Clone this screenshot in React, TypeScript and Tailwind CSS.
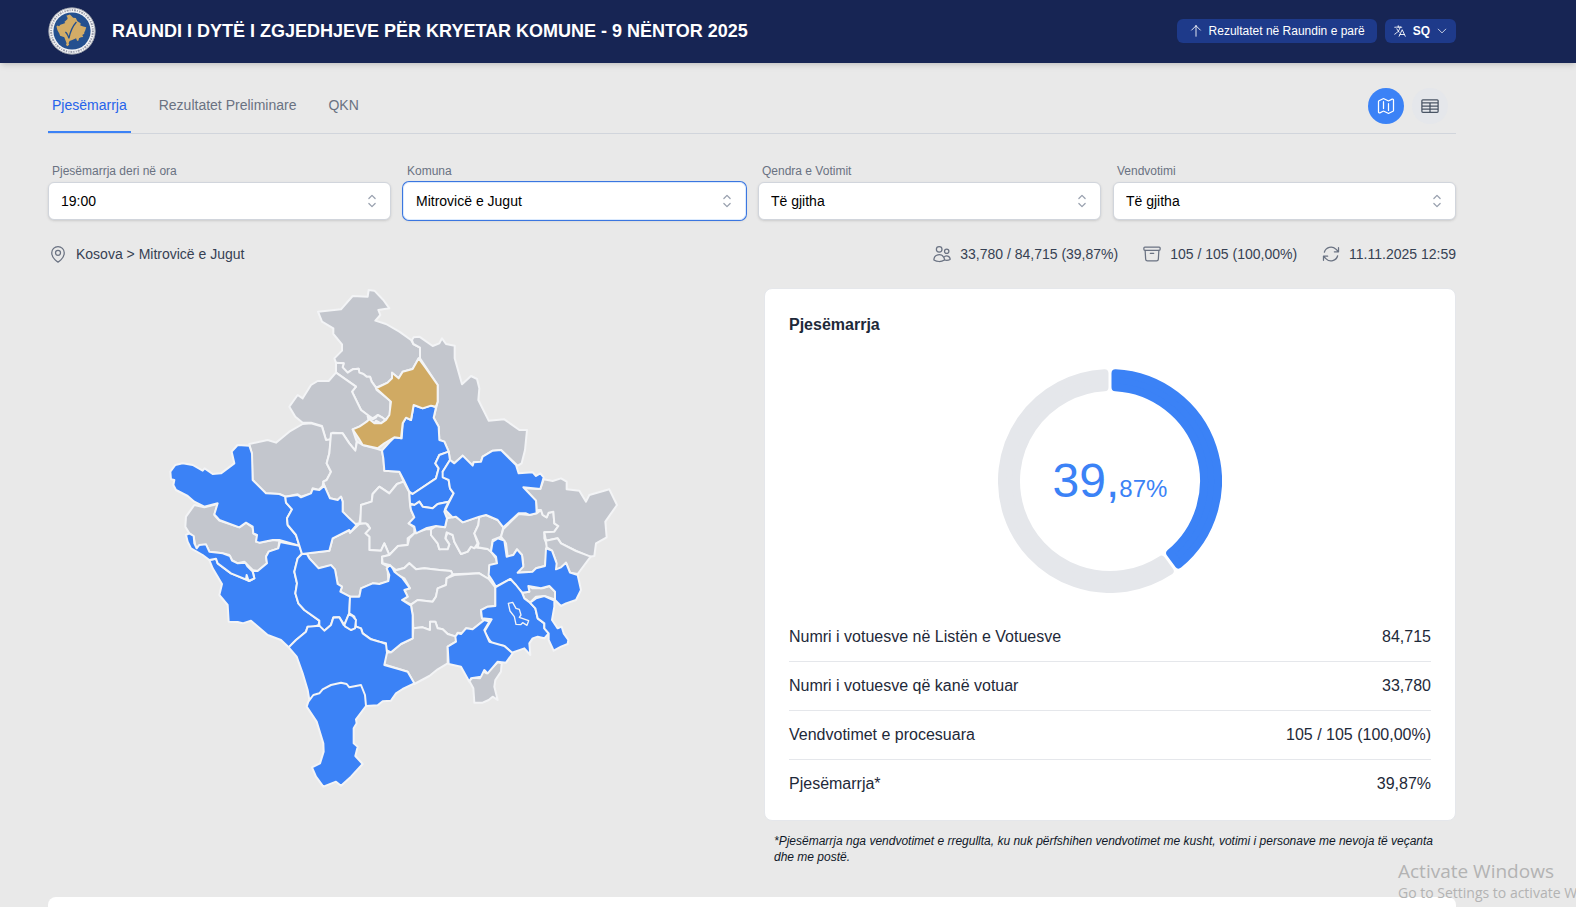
import React from 'react';
import clsx from 'clsx';
import {
  HiChevronUpDown,
  HiOutlineArchiveBox,
  HiOutlineArrowPath,
  HiOutlineArrowUp,
  HiOutlineChevronDown,
  HiOutlineLanguage,
  HiOutlineMap,
  HiOutlineMapPin,
  HiOutlineTableCells,
  HiOutlineUsers,
} from 'react-icons/hi2';

type Status = 'idle' | 'active' | 'selected';

interface Municipality {
  name: string;
  status: Status;
  points: string;
}

const MUNICIPALITIES: Municipality[] = [
  { name: 'Leposaviq', status: 'idle', points: '476,95 545,88 580,48 625,50 628,30 645,32 672,60 690,85 657,90 663,105 648,122 680,132 720,155 755,180 762,192 782,203 782,235 778,235 760,267 730,275 718,295 698,278 698,295 685,308 650,323 637,305 632,290 622,290 612,282 600,278 598,266 580,268 565,278 550,262 553,250 530,248 525,235 548,212 548,193 522,162 522,145 488,125' },
  { name: 'Zveçan', status: 'idle', points: '530,248 553,250 550,262 565,278 580,268 598,266 600,278 612,282 622,290 632,290 637,305 650,323 652,330 693,362 692,405 678,420 668,412 655,405 640,415 625,405 605,390 578,335 590,320 530,278' },
  { name: 'Zubin Potok', status: 'idle', points: '530,278 590,320 578,335 605,390 625,405 628,420 612,435 580,448 592,485 588,512 570,490 550,460 520,458 512,480 500,480 488,438 455,428 430,428 408,410 390,380 415,345 430,355 455,315 475,303 508,303' },
  { name: 'Istog', status: 'idle', points: '270,492 325,480 350,488 390,455 430,432 455,430 488,440 500,480 515,478 510,520 502,550 515,575 502,600 492,605 490,618 478,630 460,625 455,640 425,650 415,643 378,650 360,642 320,640 280,600 277,520' },
  { name: 'Skenderaj', status: 'idle', points: '515,460 550,460 570,490 588,512 593,485 610,495 655,507 668,512 672,535 675,572 720,575 733,605 713,612 690,640 660,620 640,642 637,665 605,675 605,700 600,730 585,733 570,715 550,695 550,665 545,650 535,660 512,655 495,617 492,605 502,600 515,575 502,550 510,520' },
  { name: 'Podujevë', status: 'idle', points: '758,180 763,172 780,170 820,198 840,190 848,175 860,192 886,197 886,235 908,313 935,288 953,297 960,325 957,360 988,422 1035,418 1080,450 1103,450 1097,510 1087,550 1075,557 1025,510 1000,512 970,530 965,545 943,547 940,557 910,527 885,550 872,540 868,515 855,485 840,480 838,440 823,413 835,365 835,315 782,235 782,203 762,192' },
  { name: 'Drenas', status: 'idle', points: '733,605 750,637 752,672 755,690 765,712 748,730 765,742 765,760 745,775 745,795 716,798 690,825 675,790 665,812 630,810 630,770 618,760 632,745 625,733 603,730 605,675 637,665 640,642 660,620 690,640 713,612' },
  { name: 'Deçan', status: 'idle', points: '105,675 135,682 175,672 165,705 180,722 240,742 260,728 280,742 282,760 295,768 290,785 300,788 340,780 360,782 357,805 328,815 320,830 323,850 295,873 280,870 255,845 235,850 218,840 210,825 190,820 150,815 140,795 120,795 110,808 103,770 90,760 78,740 80,710' },
  { name: 'Malishevë', status: 'idle', points: '443,820 510,812 520,775 570,750 572,758 600,732 620,730 632,745 618,760 630,770 630,810 665,812 675,790 690,825 668,830 668,850 690,862 685,870 687,905 660,912 640,910 605,925 600,950 572,950 543,935 548,920 535,912 527,870 515,857 478,865 450,835' },
  { name: 'Lipjan', status: 'idle', points: '690,825 716,798 745,795 750,775 765,760 800,748 815,748 815,765 835,790 840,808 865,805 870,793 858,775 865,757 880,765 885,785 905,822 925,815 935,800 985,807 995,815 1010,835 1013,850 990,858 988,897 960,880 880,883 875,873 840,870 795,865 770,868 750,850 735,864 710,870 690,855 670,850 668,830' },
  { name: 'Graçanicë', status: 'idle', points: '815,748 830,738 857,742 863,715 880,712 890,710 910,727 960,710 957,735 945,760 955,790 945,805 935,800 925,815 905,822 885,785 880,765 862,757 858,775 870,793 865,808 840,808 835,790 815,765' },
  { name: 'Fshatrat e Prishtinës', status: 'idle', points: '960,710 980,705 1015,720 1032,742 1025,770 1000,780 995,815 985,807 955,802 958,790 945,760 957,735' },
  { name: 'Novobërdë', status: 'idle', points: '1032,747 1078,702 1110,705 1132,700 1145,690 1150,705 1162,712 1168,698 1182,695 1185,730 1197,738 1185,755 1155,757 1155,775 1165,800 1157,858 1130,865 1120,875 1075,878 1092,855 1088,825 1073,808 1062,825 1045,830 1040,790 1025,770' },
  { name: 'Kamenicë', status: 'idle', points: '1153,598 1180,603 1205,595 1222,605 1222,628 1260,632 1280,665 1290,645 1350,628 1373,675 1338,725 1342,772 1310,790 1305,828 1290,830 1250,813 1205,790 1195,775 1160,782 1155,757 1185,755 1197,738 1185,730 1182,695 1168,698 1162,712 1150,705 1145,690 1132,690 1130,662 1095,625 1143,627' },
  { name: 'Ranillug', status: 'idle', points: '1160,782 1195,775 1205,790 1250,813 1294,830 1255,882 1232,878 1220,848 1205,868 1190,866 1190,845 1178,812 1162,802' },
  { name: 'Shtime', status: 'idle', points: '705,872 735,864 750,850 770,868 795,865 840,870 875,873 880,883 862,895 860,915 835,925 830,950 820,965 775,960 755,974 730,960 745,950 735,930 752,925 735,895 710,882' },
  { name: 'Ferizaj', status: 'idle', points: '755,974 775,960 820,965 830,950 835,925 860,915 862,895 885,885 960,880 988,897 1008,922 1008,978 985,980 965,992 968,1015 975,1020 940,1048 920,1045 910,1060 895,1058 890,1070 865,1062 850,1048 835,1045 828,1025 812,1025 812,1050 790,1042 762,1045 760,1005' },
  { name: 'Shtërpcë', status: 'idle', points: '762,1045 790,1042 812,1050 812,1025 828,1025 835,1045 850,1048 865,1062 890,1070 890,1085 865,1100 865,1150 835,1168 810,1188 765,1212 745,1175 675,1153 680,1118 695,1117 725,1092 760,1075' },
  { name: 'Partesh', status: 'idle', points: '1088,938 1110,935 1107,918 1120,925 1150,925 1170,918 1187,935 1187,958 1155,948 1130,950 1112,968 1095,955' },
  { name: 'Hani i Elezit', status: 'idle', points: '930,1203 940,1193 962,1195 968,1172 982,1180 1015,1147 1027,1150 1025,1175 1008,1200 1005,1220 1015,1260 1000,1250 988,1260 970,1268 945,1268 942,1225' },
  { name: 'Pejë', status: 'active', points: '33,575 48,555 70,550 100,555 130,572 136,565 160,582 185,580 225,550 217,515 235,495 270,497 278,520 280,600 320,640 360,642 378,650 380,668 398,688 383,715 385,735 410,765 420,797 360,780 340,780 300,788 290,785 293,765 282,760 280,740 260,728 240,742 180,720 165,703 175,670 135,680 105,665 85,648 50,630 42,615 45,600 35,598' },
  { name: 'Gjakovë', status: 'active', points: '150,840 170,836 175,850 215,880 270,903 285,895 280,873 295,873 323,850 320,830 328,815 357,805 362,786 420,797 428,820 415,835 405,875 413,910 408,940 417,970 435,990 480,1022 478,1035 460,1042 445,1040 440,1055 410,1080 388,1102 365,1080 325,1065 275,1022 250,1030 235,1026 208,1025 205,975 180,945 188,912 160,865' },
  { name: 'Junik', status: 'active', points: '90,760 103,768 105,790 112,805 120,795 140,793 150,815 190,820 212,828 218,842 235,850 258,848 265,860 280,875 285,895 268,903 262,885 260,898 215,880 175,850 170,836 150,840 130,825 95,805 85,785 80,765' },
  { name: 'Klinë', status: 'active', points: '378,650 415,645 425,652 455,640 460,627 480,630 495,617 512,655 535,660 545,650 550,665 550,695 570,715 592,735 572,758 570,750 520,775 510,812 428,822 420,797 410,765 385,735 383,715 398,688 380,668' },
  { name: 'Rahovec', status: 'active', points: '428,822 443,822 450,835 478,865 515,855 527,868 535,912 548,920 543,935 572,950 570,1000 555,1035 540,1012 522,1012 515,1035 495,1052 480,1040 480,1022 435,990 417,970 408,940 413,910 405,875 415,835' },
  { name: 'Suharekë', status: 'active', points: '682,865 692,855 700,865 705,875 730,895 752,925 735,930 745,950 728,960 755,977 760,1005 760,1075 725,1092 695,1117 680,1110 680,1090 660,1085 635,1078 610,1060 605,1045 590,1040 585,1010 570,1000 572,950 600,950 605,925 640,910 660,912 687,903 690,885' },
  { name: 'Prizren', status: 'active', points: '388,1102 410,1080 440,1055 445,1040 480,1037 495,1052 515,1035 522,1013 540,1012 553,1035 575,1050 590,1040 605,1045 610,1060 635,1078 660,1085 680,1092 683,1118 675,1155 720,1168 745,1175 765,1210 730,1227 710,1240 695,1262 670,1264 655,1276 620,1278 590,1250 450,1260 445,1230 430,1180 412,1130' },
  { name: 'Mamushë', status: 'active', points: '555,1035 568,1003 580,1008 590,1020 587,1045 575,1050 558,1040' },
  { name: 'Dragash', status: 'active', points: '447,1265 462,1245 480,1240 490,1228 515,1215 545,1208 562,1212 570,1222 605,1215 617,1245 620,1278 590,1318 592,1330 583,1345 583,1390 595,1400 588,1428 610,1452 575,1490 545,1517 530,1505 492,1520 470,1490 458,1462 482,1450 493,1415 492,1390 472,1325 442,1280' },
  { name: 'Vushtrri', status: 'active', points: '668,512 690,487 705,472 727,475 730,430 740,413 755,420 763,375 790,385 815,377 830,382 823,413 838,440 840,480 855,485 868,515 840,525 828,550 838,565 830,595 760,642 750,635 733,600 720,575 675,572 672,535' },
  { name: 'Obiliq', status: 'active', points: '868,515 872,540 850,575 855,592 868,600 872,625 883,640 868,665 835,672 820,685 790,680 780,665 765,675 752,670 750,637 760,642 830,595 838,565 828,550 840,525' },
  { name: 'Prishtinë', status: 'active', points: '872,540 885,550 910,527 940,557 943,547 965,545 970,530 1000,512 1025,510 1070,555 1078,580 1120,577 1130,588 1143,580 1153,592 1143,627 1092,622 1130,662 1132,700 1110,705 1100,700 1078,700 1032,742 1015,720 980,705 960,710 910,727 890,710 880,712 858,690 870,665 883,640 872,625 868,600 850,592 850,575' },
  { name: 'Fushë Kosovë', status: 'active', points: '752,672 765,675 780,665 790,680 820,685 835,672 868,665 858,685 855,695 863,715 857,742 830,738 800,745 770,760 765,740 748,730 765,712 755,690' },
  { name: 'Gjilan', status: 'active', points: '1000,785 1015,775 1035,782 1042,830 1062,825 1073,808 1088,825 1092,860 1075,878 1120,875 1130,865 1157,858 1160,805 1178,812 1192,850 1190,868 1205,862 1220,848 1232,878 1255,885 1265,930 1250,960 1220,970 1205,978 1187,960 1187,935 1170,918 1145,925 1107,918 1110,935 1088,938 1053,897 1010,920 998,900 988,885 990,855 1013,850 1010,830 995,815' },
  { name: 'Viti', status: 'active', points: '1008,922 1053,897 1070,915 1088,938 1095,955 1112,968 1128,985 1135,1015 1155,1030 1155,1045 1168,1060 1155,1075 1135,1070 1120,1075 1110,1090 1113,1125 1095,1105 1058,1118 1035,1098 1000,1092 990,1080 975,1055 997,1018 968,1015 965,990 985,980 1008,978' },
  { name: 'Viti Lindore', status: 'active', points: '1112,968 1130,955 1155,948 1185,962 1185,980 1178,1020 1195,1045 1207,1040 1213,1060 1227,1080 1225,1092 1205,1100 1183,1112 1168,1080 1168,1060 1155,1045 1155,1030 1135,1015 1128,985' },
  { name: 'Kaçanik', status: 'active', points: '865,1100 890,1085 888,1070 895,1060 905,1062 920,1045 940,1048 975,1020 990,1025 975,1050 990,1085 1035,1098 1060,1120 1040,1148 1015,1145 985,1180 975,1170 965,1190 935,1195 930,1205 905,1160 868,1152' },
  { name: 'Mitrovicë e Veriut', status: 'idle', points: '625,410 640,418 650,412 655,405 668,412 678,420 665,430 650,422 645,430 630,420' },
  { name: 'Mitrovicë e Jugut', status: 'selected', points: '580,448 600,440 622,425 630,418 645,430 665,430 680,420 690,405 695,365 650,325 685,308 698,295 698,278 718,295 730,275 760,267 778,235 798,262 835,315 835,365 830,380 815,377 790,385 763,375 755,420 740,413 730,430 725,475 705,472 675,490 655,505 610,495 598,475' },
];

const ENCLAVE = '1047,970 1060,967 1070,985 1080,988 1085,1005 1080,1012 1108,1022 1103,1036 1090,1028 1084,1034 1070,1033 1065,1010 1052,993';

const FILTERS = [
  { id: 'hour', label: 'Pjesëmarrja deri në ora', value: '19:00', focused: false },
  { id: 'municipality', label: 'Komuna', value: 'Mitrovicë e Jugut', focused: true },
  { id: 'center', label: 'Qendra e Votimit', value: 'Të gjitha', focused: false },
  { id: 'station', label: 'Vendvotimi', value: 'Të gjitha', focused: false },
];

const ROWS = [
  ['Numri i votuesve në Listën e Votuesve', '84,715'],
  ['Numri i votuesve që kanë votuar', '33,780'],
  ['Vendvotimet e procesuara', '105 / 105 (100,00%)'],
  ['Pjesëmarrja*', '39,87%'],
];

function Logo() {
  return (
    <svg viewBox="23 20 145 147" className="size-12 shrink-0" aria-hidden="true">
      <circle cx="95.5" cy="93.5" r="72" fill="#f3f4f6" />
      <circle cx="95.5" cy="93.5" r="71" fill="none" stroke="#6b7280" strokeWidth="2" />
      <circle cx="95.5" cy="93.5" r="64" fill="none" stroke="#9a9dab" strokeWidth="6" strokeDasharray="4 3 6 3 3 4" />
      <circle cx="95.5" cy="93.5" r="57" fill="#24508f" />
      <path
        d="M78 47 89 43 93 47 99 53 107 54 112 64 122 70 121 77 130 80 139 82 136 92 133 98 133 102 127 106 130 112 123 113 117 116 115 123 111 123 108 116 98 120 88 124 85 131 87 135 82 140 77 136 79 131 76 123 72 113 59 108 57 102 51 91 48 80 50 77 56 79 60 74 67 72 75 69 72 66 77 61 82 57 81 51Z"
        fill="#d3ac66"
      />
      <path d="M75 97c6 3 8 9 11 19 4-20 12-38 23-50" fill="none" stroke="#24508f" strokeWidth="4" />
    </svg>
  );
}

function Header() {
  return (
    <header className="bg-[#172554] pt-[7px] pb-2 shadow-md">
      <div className="flex max-w-[1504px] items-center px-12">
        <Logo />
        <h1 className="ml-4 flex-1 text-lg font-bold text-white">
          RAUNDI I DYTË I ZGJEDHJEVE PËR KRYETAR KOMUNE - 9 NËNTOR 2025
        </h1>
        <div className="flex items-center gap-2 text-xs text-white">
          <a href="#raundi-1" className="flex h-6 items-center gap-1.5 rounded-md bg-[#1e3a8a] px-3 font-medium">
            <HiOutlineArrowUp className="size-3.5" />
            Rezultatet në Raundin e parë
          </a>
          <button type="button" className="flex h-6 items-center gap-1.5 rounded-md bg-[#1e3a8a] px-2 font-bold">
            <HiOutlineLanguage className="size-3.5" />
            SQ
            <HiOutlineChevronDown className="size-3" />
          </button>
        </div>
      </div>
    </header>
  );
}

function TabBar() {
  const tabs = ['Pjesëmarrja', 'Rezultatet Preliminare', 'QKN'];
  return (
    <div className="flex items-end justify-between border-b border-gray-300">
      <nav className="flex gap-6 text-sm">
        {tabs.map((tab, i) => (
          <a
            key={tab}
            href={`#tab-${i}`}
            className={clsx(
              'border-b-2 px-1 pb-4',
              i === 0 ? 'border-[#3b82f6] text-[#2563eb]' : 'border-transparent text-gray-500'
            )}
          >
            {tab}
          </a>
        ))}
      </nav>
      <div className="flex gap-2 pr-2 pb-[9px]">
        <button type="button" aria-label="Harta" className="flex size-9 items-center justify-center rounded-full bg-[#3b82f6] text-white">
          <HiOutlineMap className="size-5" />
        </button>
        <button type="button" aria-label="Tabela" className="flex size-9 items-center justify-center rounded-full bg-[#e5e7eb] text-gray-600">
          <HiOutlineTableCells className="size-5" />
        </button>
      </div>
    </div>
  );
}

function Filters() {
  return (
    <div className="mt-[29px] grid grid-cols-4 gap-3">
      {FILTERS.map((f) => (
        <div key={f.id}>
          <label htmlFor={f.id} className="mb-[3px] block pl-1 text-xs text-gray-500">
            {f.label}
          </label>
          <div className="relative">
            <select
              id={f.id}
              defaultValue={f.value}
              className={clsx(
                'block h-[38px] w-full appearance-none rounded-md border bg-white px-3 text-sm text-black shadow-sm outline-none',
                f.focused ? 'border-blue-100 ring-1 ring-[#3b76e0]' : 'border-gray-300'
              )}
            >
              <option>{f.value}</option>
            </select>
            <HiChevronUpDown className="pointer-events-none absolute inset-y-0 right-[9px] my-auto size-5 text-gray-400" />
          </div>
        </div>
      ))}
    </div>
  );
}

function StatusLine() {
  return (
    <div className="mt-6 flex items-center justify-between text-sm text-gray-700">
      <div className="flex items-center gap-2">
        <HiOutlineMapPin className="size-5 text-gray-500" />
        Kosova &gt; Mitrovicë e Jugut
      </div>
      <div className="flex gap-6">
        <div className="flex items-center gap-2">
          <HiOutlineUsers className="size-5 text-gray-500" />
          33,780 / 84,715 (39,87%)
        </div>
        <div className="flex items-center gap-2">
          <HiOutlineArchiveBox className="size-5 text-gray-500" />
          105 / 105 (100,00%)
        </div>
        <div className="flex items-center gap-2">
          <HiOutlineArrowPath className="size-5 text-gray-500" />
          11.11.2025 12:59
        </div>
      </div>
    </div>
  );
}

function KosovoMap() {
  return (
    <svg viewBox="-1 24 1410 1521" className="w-[470px] max-w-full" role="img" aria-label="Harta e Kosovës">
      <g stroke="#f3f4f6" strokeWidth="6" strokeLinejoin="round">
        {MUNICIPALITIES.map((m) => (
          <polygon
            key={m.name}
            points={m.points}
            className={clsx(
              m.status === 'idle' && 'fill-[#c3c6cd]',
              m.status === 'active' && 'fill-[#3b82f6]',
              m.status === 'selected' && 'fill-[#d0aa63]'
            )}
          />
        ))}
        <polygon points={ENCLAVE} className="fill-[#3b82f6]" strokeWidth="4" />
      </g>
    </svg>
  );
}

const GAP = 1.5;
const CORNER = 4;

// Ring segment between two angles (clockwise from the top), inset so that the
// round stroke joins give it soft corners.
function segmentPath(from: number, to: number, outer: number, inner: number) {
  const ro = outer - CORNER;
  const ri = inner + CORNER;
  const inset = (r: number) => Math.asin((GAP + CORNER) / r);
  const at = (r: number, a: number) => `${r * Math.sin(a)} ${-r * Math.cos(a)}`;
  const large = to - from > Math.PI ? 1 : 0;
  return [
    `M${at(ro, from + inset(ro))}`,
    `A${ro} ${ro} 0 ${large} 1 ${at(ro, to - inset(ro))}`,
    `L${at(ri, to - inset(ri))}`,
    `A${ri} ${ri} 0 ${large} 0 ${at(ri, from + inset(ri))}Z`,
  ].join('');
}

function Donut({ value }: { value: number }) {
  const split = value * 2 * Math.PI;
  return (
    <div className="mx-auto mt-8 mb-5 grid size-56 place-items-center">
      <svg viewBox="-112 -112 224 224" className="col-start-1 row-start-1 size-56" aria-hidden="true">
        <g strokeWidth={CORNER * 2} strokeLinejoin="round">
          <path d={segmentPath(0, split, 112, 90)} className="fill-[#3b82f6] stroke-[#3b82f6]" />
          <path d={segmentPath(split, 2 * Math.PI, 112, 90)} className="fill-gray-200 stroke-gray-200" />
        </g>
      </svg>
      <div className="col-start-1 row-start-1 text-[#3b82f6]">
        <span className="text-5xl">39,</span>
        <span className="text-2xl">87%</span>
      </div>
    </div>
  );
}

function TurnoutCard() {
  return (
    <div>
      <section className="rounded-lg border border-gray-200 bg-white p-6 pb-3 text-gray-800">
        <h2 className="text-base font-bold">Pjesëmarrja</h2>
        <Donut value={0.3987} />
        <table className="w-full text-base">
          <tbody>
            {ROWS.map(([label, value]) => (
              <tr key={label} className="border-b border-gray-200 last:border-0">
                <th scope="row" className="py-3 text-left font-normal">{label}</th>
                <td className="py-3 text-right">{value}</td>
              </tr>
            ))}
          </tbody>
        </table>
      </section>
      <p className="mt-3 px-2.5 text-xs text-gray-900 italic">
        *Pjesëmarrja nga vendvotimet e rregullta, ku nuk përfshihen vendvotimet me kusht, votimi i personave me nevoja të veçanta dhe me postë.
      </p>
    </div>
  );
}

export default function App() {
  return (
    <div className="relative flex h-screen flex-col overflow-hidden bg-[#e9e9e9] font-['Liberation_Sans',Arial,sans-serif]">
      <Header />
      <main className="flex w-full max-w-[1504px] flex-1 flex-col px-12 pt-[25px]">
        <TabBar />
        <Filters />
        <StatusLine />
        <div className="mt-6 grid grid-cols-2 gap-6">
          <div className="flex items-start justify-center">
            <KosovoMap />
          </div>
          <TurnoutCard />
        </div>
        <div className="mt-8 flex-1 rounded-t-lg bg-white" />
      </main>
      <div className="pointer-events-none absolute right-0 bottom-1 w-[178px] font-['Open_Sans','Noto_Sans',sans-serif] whitespace-nowrap text-[#b3b3b3]">
        <div className="text-[19px] leading-6">Activate Windows</div>
        <div className="text-sm">Go to Settings to activate Windows.</div>
      </div>
    </div>
  );
}
